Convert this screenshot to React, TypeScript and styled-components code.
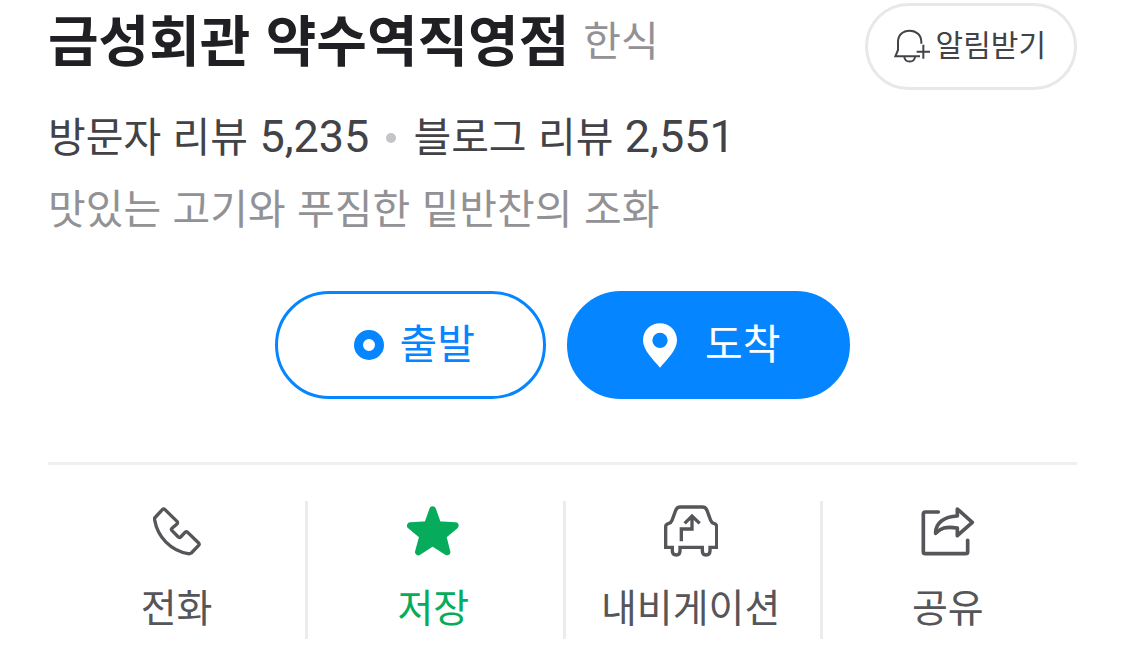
import React from "react";
import styled, { createGlobalStyle } from "styled-components";

const GlobalStyle = createGlobalStyle`
  * { box-sizing: border-box; }
  body {
    margin: 0;
    background: #fff;
    color: #424247;
    font-family: "Liberation Sans", "Noto Sans CJK KR", sans-serif;
  }
  button { font-family: inherit; cursor: pointer; }
  a { color: inherit; text-decoration: none; }
  svg { display: block; flex: none; }
`;

const Page = styled.main`
  padding: 3px 48px 28px;
`;

const Header = styled.header`
  display: flex;
  align-items: flex-start;
  justify-content: space-between;
`;

const TitleRow = styled.div`
  display: flex;
  align-items: center;
  gap: 14px;
`;

const Title = styled.h1`
  margin: 0;
  font-size: 55px;
  line-height: 78px;
  font-weight: 700;
  color: #202024;
`;

const Category = styled.span`
  font-size: 41px;
  line-height: 78px;
  color: #929296;
`;

const AlarmButton = styled.button`
  display: flex;
  align-items: center;
  gap: 6px;
  height: 87px;
  padding: 0 28px 2px 26px;
  border: 3px solid #e8e8ec;
  border-radius: 44px;
  background: #fff;
  color: #424247;
  font-size: 30px;
  line-height: 40px;
`;

const Reviews = styled.div`
  display: flex;
  align-items: center;
  gap: 17px;
  height: 72px;
  margin-top: 12px;
  font-size: 41px;
  line-height: 72px;
`;

const Count = styled.span`
  font-family: Roboto, sans-serif;
  font-size: 45px;
  line-height: 1;
`;

const Dot = styled.span`
  width: 10px;
  height: 10px;
  border-radius: 50%;
  background: #c4c4c8;
`;

const Description = styled.p`
  margin: 0;
  font-size: 41px;
  line-height: 72px;
  color: #929296;
`;

const RouteButtons = styled.div`
  display: flex;
  justify-content: center;
  gap: 21px;
  margin-top: 45px;
`;

const RouteButton = styled.button<{ $filled?: boolean }>`
  display: flex;
  align-items: center;
  gap: ${(p) => (p.$filled ? 28 : 16)}px;
  height: 108px;
  padding: ${(p) => (p.$filled ? "0 67px 0 73px" : "0 68px 0 76px")};
  border: 3px solid #0585ff;
  border-radius: 54px;
  background: ${(p) => (p.$filled ? "#0585ff" : "#fff")};
  color: ${(p) => (p.$filled ? "#fff" : "#0585ff")};
  font-size: 41px;
  line-height: 60px;
`;

const Actions = styled.nav`
  display: grid;
  grid-template-columns: repeat(4, 1fr);
  margin-top: 63px;
  padding-top: 36px;
  border-top: 3px solid #efeff0;
`;

const Action = styled.a<{ $active?: boolean }>`
  display: flex;
  flex-direction: column;
  align-items: center;
  height: 138px;
  color: ${(p) => (p.$active ? "#06ac5b" : "#55555a")};
  font-size: 39px;
  line-height: 56px;
  & + & {
    padding-right: 4px;
    border-left: 3px solid #ececee;
  }
`;

const IconBox = styled.span`
  display: flex;
  align-items: center;
  height: 60px;
  margin-bottom: 20px;
`;

const BellIcon = () => (
  <svg width="36" height="34" viewBox="132 82 108 102" fill="none" stroke="currentColor" strokeWidth="6" aria-hidden="true">
    <path d="M214 126V121C214 101 199 87 179 87C158 87 144 101 144 121V145L136 164H210" />
    <path d="M163 166C165 184 193 184 195 166M220 129V171M200 150H240" />
  </svg>
);

const StartIcon = () => (
  <svg width="30" height="30" viewBox="0 0 30 30" fill="none" stroke="currentColor" strokeWidth="9" aria-hidden="true">
    <circle cx="15" cy="15" r="10.5" />
  </svg>
);

const PinIcon = () => (
  <svg width="34" height="45" viewBox="249 124 102 135" fill="currentColor" fillRule="evenodd" aria-hidden="true">
    <path d="M300 125C272 125 249 147 249 176C249 205 280 235 300 258C320 235 351 205 351 176C351 147 328 125 300 125ZM300 153A23 23 0 1 1 300 199A23 23 0 1 1 300 153Z" />
  </svg>
);

const PhoneIcon = () => (
  <svg width="48" height="49" viewBox="69 33 144 147" fill="none" stroke="currentColor" strokeWidth="10" strokeLinejoin="round" aria-hidden="true">
    <path d="M74 66L97 41Q101 37 105 41L141 76Q144 80 141 84L126 97Q122 100 126 104L145 123Q149 126 152 123L165 109Q169 105 173 109L206 141Q209 145 206 148L184 171Q180 174 174 173C122 163 83 124 74 72Q73 68 74 66Z" />
  </svg>
);

const StarIcon = () => (
  <svg width="52" height="50" viewBox="88 33 156 150" fill="currentColor" stroke="currentColor" strokeWidth="20" strokeLinejoin="round" aria-hidden="true">
    <path d="M165 44L181 89L233 92L196 123L208 171L165 143L122 171L135 123L98 92L149 89Z" />
  </svg>
);

const CarIcon = () => (
  <svg width="54" height="52" viewBox="218 28 162 156" fill="none" stroke="currentColor" strokeWidth="10" aria-hidden="true">
    <path d="M223 155V93Q223 86 231 84Q239 82 242 74L253 44Q257 34 267 34H333Q343 34 347 44L358 74Q361 82 369 84Q376 86 376 93V155H356V166Q356 178 344 178Q333 178 333 166V155H266V166Q266 178 255 178Q243 178 243 166V155Z" />
    <path d="M270 137V100H302V62M280 83L302 61L325 83" />
  </svg>
);

const ShareIcon = () => (
  <svg width="54" height="49" viewBox="66 35 162 147" fill="none" stroke="currentColor" strokeWidth="11" strokeLinecap="round" strokeLinejoin="round" aria-hidden="true">
    <path d="M118 50H79Q73 50 73 56V169Q73 175 79 175H200Q206 175 206 169V135" />
    <path d="M175 41L220 81L175 121V98C140 92 124 99 110 114C109 84 135 63 175 62Z" />
  </svg>
);

const actions = [
  { label: "전화", Icon: PhoneIcon },
  { label: "저장", Icon: StarIcon, active: true },
  { label: "내비게이션", Icon: CarIcon },
  { label: "공유", Icon: ShareIcon },
];

export default function App() {
  return (
    <>
      <GlobalStyle />
      <Page>
        <Header>
          <TitleRow>
            <Title>금성회관 약수역직영점</Title>
            <Category>한식</Category>
          </TitleRow>
          <AlarmButton type="button">
            <BellIcon />
            알림받기
          </AlarmButton>
        </Header>
        <Reviews>
          <a href="#visitor">방문자 리뷰 <Count>5,235</Count></a>
          <Dot />
          <a href="#blog">블로그 리뷰 <Count>2,551</Count></a>
        </Reviews>
        <Description>맛있는 고기와 푸짐한 밑반찬의 조화</Description>
        <RouteButtons>
          <RouteButton type="button">
            <StartIcon />
            출발
          </RouteButton>
          <RouteButton type="button" $filled>
            <PinIcon />
            도착
          </RouteButton>
        </RouteButtons>
        <Actions>
          {actions.map(({ label, Icon, active }) => (
            <Action key={label} href={"#" + label} $active={active}>
              <IconBox>
                <Icon />
              </IconBox>
              {label}
            </Action>
          ))}
        </Actions>
      </Page>
    </>
  );
}
